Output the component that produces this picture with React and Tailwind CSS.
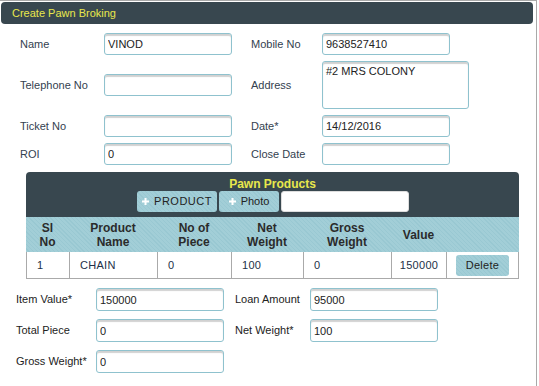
import React from "react";

// Create Pawn Broking form — old-school ASP.NET look.

const FONT = "font-['Liberation_Sans',Arial,sans-serif]";
const STRIPES =
  "bg-[repeating-linear-gradient(45deg,#a2ced7_0px,#a2ced7_2px,#99c8d2_2px,#99c8d2_3px)]";
const INPUT =
  "h-[22px] w-[128px] rounded-[3px] border border-[#8fc2ce] bg-white px-[3px] text-[11px] text-[#222] shadow-[inset_0_2px_1px_rgba(0,0,0,0.18)] outline-none";

function Field({ label, value, wide }) {
  return (
    <div className="flex items-center">
      <div className={wide ? "w-[71px] text-[11px] text-[#33414f]" : "w-[84px] text-[11px] text-[#33414f]"}>{label}</div>
      <input readOnly value={value} className={INPUT} />
    </div>
  );
}

function Plus() {
  return (
    <svg width="9" height="9" viewBox="0 0 9 9" className="mr-[4px]">
      <path d="M4.5 1v7M1 4.5h7" stroke="#fff" strokeWidth="2" />
    </svg>
  );
}

const COLS = [
  { key: "sl", label: ["Sl", "No"], w: "w-[43px]", val: "1" },
  { key: "name", label: ["Product", "Name"], w: "w-[88px]", val: "CHAIN" },
  { key: "pcs", label: ["No of", "Piece"], w: "w-[74px]", val: "0" },
  { key: "net", label: ["Net", "Weight"], w: "w-[72px]", val: "100" },
  { key: "gross", label: ["Gross", "Weight"], w: "w-[88px]", val: "0" },
  { key: "value", label: ["Value"], w: "w-[55px]", val: "150000" },
];

export default function App() {
  return (
    <div className={`${FONT} h-[386px] w-[537px] overflow-hidden border-t border-r border-[#a9a9a9] bg-white`}>
      <div className="mt-[1px] ml-[1px] mr-[3px] flex h-[22px] items-center rounded-[4px] bg-[#38474f] pl-[11px] text-[11px] text-[#e8e84c]">
        Create Pawn Broking
      </div>

      <div className="pl-[20px]">
        <div className="mt-[9px] flex h-[22px] items-center">
          <Field label="Name" value="VINOD" />
          <div className="ml-[19px]"><Field label="Mobile No" value="9638527410" wide /></div>
        </div>

        <div className="mt-[6px] flex h-[48px] items-center">
          <Field label="Telephone No" value="" />
          <div className="ml-[19px] flex items-center">
            <div className="w-[71px] text-[11px] text-[#33414f]">Address</div>
            <textarea
              readOnly
              value="#2 MRS COLONY"
              className="h-[48px] w-[147px] resize-none rounded-[3px] border border-[#8fc2ce] bg-white px-[3px] pt-[3px] text-[11px] leading-[13px] text-[#222] shadow-[inset_0_2px_1px_rgba(0,0,0,0.18)] outline-none"
            />
          </div>
        </div>

        <div className="mt-[6px] flex h-[22px] items-center">
          <Field label="Ticket No" value="" />
          <div className="ml-[19px]"><Field label="Date*" value="14/12/2016" wide /></div>
        </div>

        <div className="mt-[6px] flex h-[22px] items-center">
          <Field label="ROI" value="0" />
          <div className="ml-[19px]"><Field label="Close Date" value="" wide /></div>
        </div>
      </div>

      <div className="ml-[26px] mt-[7px] w-[493px]">
        <div className="flex h-[45px] flex-col items-center rounded-t-[4px] bg-[#38474f] pt-[5px]">
          <div className="text-[12px] font-bold leading-[14px] text-[#e8e84c]">Pawn Products</div>
          <div className="flex items-center gap-[2px]">
            <button className={`${STRIPES} flex h-[21px] w-[80px] items-center justify-center rounded-[3px] text-[11px] tracking-[0.5px] text-[#222]`}>
              <Plus />PRODUCT
            </button>
            <button className={`${STRIPES} flex h-[21px] w-[60px] items-center justify-center rounded-[3px] text-[11px] text-[#222]`}>
              <Plus />Photo
            </button>
            <input readOnly className="h-[21px] w-[128px] rounded-[3px] border border-[#ddd] bg-white outline-none" />
          </div>
        </div>

        <div className={`${STRIPES} flex h-[35px] items-center`}>
          {COLS.map((c) => (
            <div key={c.key} className={`${c.w} text-center text-[12px] font-bold leading-[14px] text-[#2b2b2b]`}>
              {c.label.map((l) => <div key={l}>{l}</div>)}
            </div>
          ))}
          <div className="flex-1" />
        </div>

        <div className="flex h-[27px] border-b border-l border-r border-[#aaa] bg-white text-[11px] tracking-[0.3px] text-[#223048]">
          {COLS.map((c, i) => (
            <div key={c.key} className={`${c.w} flex items-center border-r border-[#aaa] ${i === 5 ? "justify-center" : "pl-[10px]"}`}>
              {c.val}
            </div>
          ))}
          <div className="flex flex-1 items-center justify-center">
            <button className={`${STRIPES} h-[21px] w-[53px] rounded-[3px] text-[11px] text-[#222]`}>Delete</button>
          </div>
        </div>
      </div>

      <div className="pl-[16px] text-[11px] text-[#222]">
        <div className="mt-[9px] flex h-[23px] items-center">
          <div className="w-[80px]">Item Value*</div>
          <input readOnly value="150000" className={INPUT + " h-[23px]"} />
          <div className="ml-[11px] w-[75px]">Loan Amount</div>
          <input readOnly value="95000" className={INPUT + " h-[23px]"} />
        </div>
        <div className="mt-[8px] flex h-[23px] items-center">
          <div className="w-[80px]">Total Piece</div>
          <input readOnly value="0" className={INPUT + " h-[23px]"} />
          <div className="ml-[11px] w-[75px]">Net Weight*</div>
          <input readOnly value="100" className={INPUT + " h-[23px]"} />
        </div>
        <div className="mt-[8px] flex h-[23px] items-center">
          <div className="w-[80px]">Gross Weight*</div>
          <input readOnly value="0" className={INPUT + " h-[23px]"} />
        </div>
      </div>
    </div>
  );
}
